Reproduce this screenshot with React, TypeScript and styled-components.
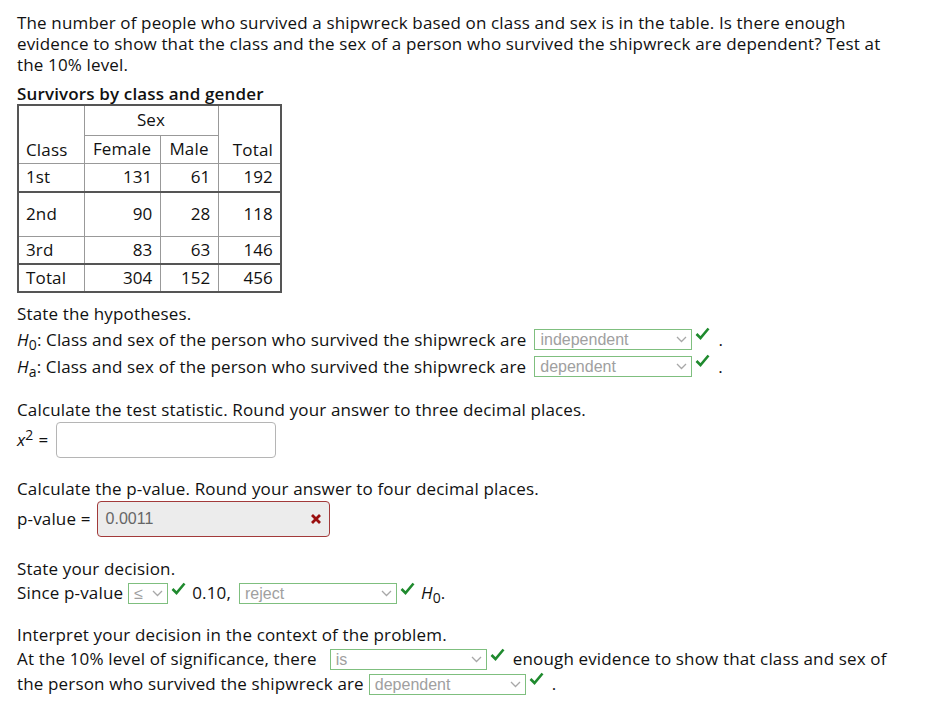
import React from "react";
import styled, { createGlobalStyle } from "styled-components";

const Global = createGlobalStyle`
  html, body { margin: 0; padding: 0; background: #fff; }
  body {
    font-family: "Open Sans", "Noto Sans", "DejaVu Sans", sans-serif;
    font-size: 17px;
    letter-spacing: 0.15px;
    color: #111;
  }
`;

const Page = styled.div`
  padding: 12px 17px 0 17px;
  width: 872px;
`;

const Para = styled.p`
  margin: 0;
  line-height: 21px;
`;

const Section = styled.div<{ $top: number }>`
  margin-top: ${(p) => p.$top}px;
`;

const Line = styled.div<{ $h?: number }>`
  display: flex;
  align-items: center;
  flex-wrap: wrap;
  min-height: ${(p) => p.$h ?? 24}px;
  line-height: 24px;
  white-space: pre;
`;

const Caption = styled.div`
  font-weight: 600;
  line-height: 20px;
  margin-top: 9px;
`;

const Table = styled.table`
  border-collapse: collapse;
  border: 2px solid #555;
  line-height: 20px;
`;

const Cell = styled.td<{ $w?: number; $h?: number; $right?: boolean; $center?: boolean; $thickTop?: boolean; $bottom?: boolean }>`
  border: 1px solid #999;
  ${(p) => (p.$thickTop ? "border-top: 2px solid #555;" : "")}
  padding: 0 7px;
  width: ${(p) => (p.$w ? `${p.$w}px` : "auto")};
  height: ${(p) => (p.$h ? `${p.$h}px` : "auto")};
  text-align: ${(p) => (p.$right ? "right" : p.$center ? "center" : "left")};
  vertical-align: ${(p) => (p.$bottom ? "bottom" : "middle")};
  padding-bottom: ${(p) => (p.$bottom ? "3px" : "0")};
  box-sizing: border-box;
`;

const HCell = styled(Cell).attrs({ as: "th" })`
  font-weight: normal;
`;

const Sym = styled.span`
  display: inline-block;
  line-height: 24px;
`;

const Ital = styled.i``;

const Sub = styled.sub`
  font-size: 14px;
  vertical-align: -4px;
  line-height: 0;
`;

const Sup = styled.sup`
  font-size: 14px;
  vertical-align: 6px;
  line-height: 0;
`;

const SelectBox = styled.div<{ $w: number; $ml: number }>`
  box-sizing: border-box;
  width: ${(p) => p.$w}px;
  height: 21px;
  border: 1px solid #7fbf7f;
  background: #fff;
  display: flex;
  align-items: center;
  justify-content: space-between;
  padding: 0 4px 0 5px;
  margin-left: ${(p) => p.$ml}px;
  font-family: "Liberation Sans", Arial, sans-serif;
  font-size: 16px;
  letter-spacing: 0;
  color: #a0a0a0;
  line-height: 19px;
`;

const Check = styled.svg`
  width: 15px;
  height: 13px;
  margin-left: 3px;
  align-self: flex-start;
  margin-top: 1px;
`;

const Chevron = () => (
  <svg width="11" height="7" viewBox="0 0 11 7">
    <path d="M1 1 L5.5 5.5 L10 1" fill="none" stroke="#a8a8a8" strokeWidth="1.3" />
  </svg>
);

const CheckMark = () => (
  <Check viewBox="0 0 15 13">
    <path d="M1.5 7 L5.5 11 L13.5 1.5" fill="none" stroke="#1f8a2e" strokeWidth="2.6" />
  </Check>
);

const Select: React.FC<{ w: number; value: string; ml?: number }> = ({ w, value, ml = 5 }) => (
  <SelectBox $w={w} $ml={ml}>
    <span>{value}</span>
    <Chevron />
  </SelectBox>
);

const TextInput = styled.div<{ $w: number; $error?: boolean }>`
  box-sizing: border-box;
  width: ${(p) => p.$w}px;
  height: 36px;
  border: 1px solid ${(p) => (p.$error ? "#a23a3a" : "#b5b5b5")};
  border-radius: 4px;
  background: ${(p) => (p.$error ? "#ececec" : "#fff")};
  margin-left: ${(p) => (p.$error ? 6 : 8)}px;
  display: flex;
  align-items: center;
  justify-content: space-between;
  padding: 0 7px 0 8px;
  font-family: "Liberation Sans", Arial, sans-serif;
  font-size: 16px;
  letter-spacing: 0;
  color: #666;
`;

const XMark = () => (
  <svg width="12" height="12" viewBox="0 0 12 12">
    <path d="M2 2 L10 10 M10 2 L2 10" stroke="#9a0f0f" strokeWidth="2.8" />
  </svg>
);

const Dot = styled.span`
  margin-left: 8px;
`;

const Gap = styled.span<{ $w: number }>`
  display: inline-block;
  width: ${(p) => p.$w}px;
`;

const H: React.FC<{ s: string }> = ({ s }) => (
  <Sym>
    <Ital>H</Ital>
    <Sub>{s}</Sub>
  </Sym>
);

export default function App() {
  return (
    <>
      <Global />
      <Page>
        <Para>
          The number of people who survived a shipwreck based on class and sex is in the table. Is there enough
          evidence to show that the class and the sex of a person who survived the shipwreck are dependent? Test at
          the 10% level.
        </Para>
        <Caption>Survivors by class and gender</Caption>
        <Table>
          <tbody>
            <tr>
              <HCell rowSpan={2} $w={66} $bottom>Class</HCell>
              <HCell colSpan={2} $h={30} $center>Sex</HCell>
              <HCell rowSpan={2} $w={63} $right $bottom>Total</HCell>
            </tr>
            <tr>
              <HCell $w={76} $h={28} $center>Female</HCell>
              <HCell $w={58} $center>Male</HCell>
            </tr>
            <tr>
              <Cell $h={29}>1st</Cell>
              <Cell $right>131</Cell>
              <Cell $right>61</Cell>
              <Cell $right>192</Cell>
            </tr>
            <tr>
              <Cell $h={44} $thickTop>2nd</Cell>
              <Cell $right $thickTop>90</Cell>
              <Cell $right $thickTop>28</Cell>
              <Cell $right $thickTop>118</Cell>
            </tr>
            <tr>
              <Cell $h={28}>3rd</Cell>
              <Cell $right>83</Cell>
              <Cell $right>63</Cell>
              <Cell $right>146</Cell>
            </tr>
            <tr>
              <Cell $h={28} $thickTop>Total</Cell>
              <Cell $right $thickTop>304</Cell>
              <Cell $right $thickTop>152</Cell>
              <Cell $right $thickTop>456</Cell>
            </tr>
          </tbody>
        </Table>

        <Section $top={9}>
          <Line>State the hypotheses.</Line>
          <Line $h={27}>
            <H s="0" />: Class and sex of the person who survived the shipwreck are
            <Select w={158} value="independent" ml={8} />
            <CheckMark />
            <Dot>.</Dot>
          </Line>
          <Line $h={27}>
            <H s="a" />: Class and sex of the person who survived the shipwreck are
            <Select w={158} value="dependent" ml={8} />
            <CheckMark />
            <Dot>.</Dot>
          </Line>
        </Section>

        <Section $top={18}>
          <Line>Calculate the test statistic. Round your answer to three decimal places.</Line>
          <Line $h={36}>
            <Sym>
              <Ital>x</Ital>
              <Sup>2</Sup>
            </Sym>
            <Gap $w={5} />=
            <TextInput $w={220} />
          </Line>
        </Section>

        <Section $top={19}>
          <Line>Calculate the p-value. Round your answer to four decimal places.</Line>
          <Line $h={36}>
            p-value =
            <TextInput $w={233} $error>
              <span>0.0011</span>
              <XMark />
            </TextInput>
          </Line>
        </Section>

        <Section $top={20}>
          <Line>State your decision.</Line>
          <Line>
            Since p-value
            <Select w={40} value="≤" />
            <CheckMark />
            <Gap $w={6} />0.10,
            <Select w={158} value="reject" ml={8} />
            <CheckMark />
            <Gap $w={6} />
            <H s="0" />.
          </Line>
        </Section>

        <Section $top={18}>
          <Line>Interpret your decision in the context of the problem.</Line>
          <Line $h={24}>
            At the 10% level of significance, there
            <Select w={157} value="is" ml={13} />
            <CheckMark />
            <Gap $w={8} />enough evidence to show that class and sex of
          </Line>
          <Line $h={26}>
            the person who survived the shipwreck are
            <Select w={157} value="dependent" />
            <CheckMark />
            <Dot>.</Dot>
          </Line>
        </Section>
      </Page>
    </>
  );
}
